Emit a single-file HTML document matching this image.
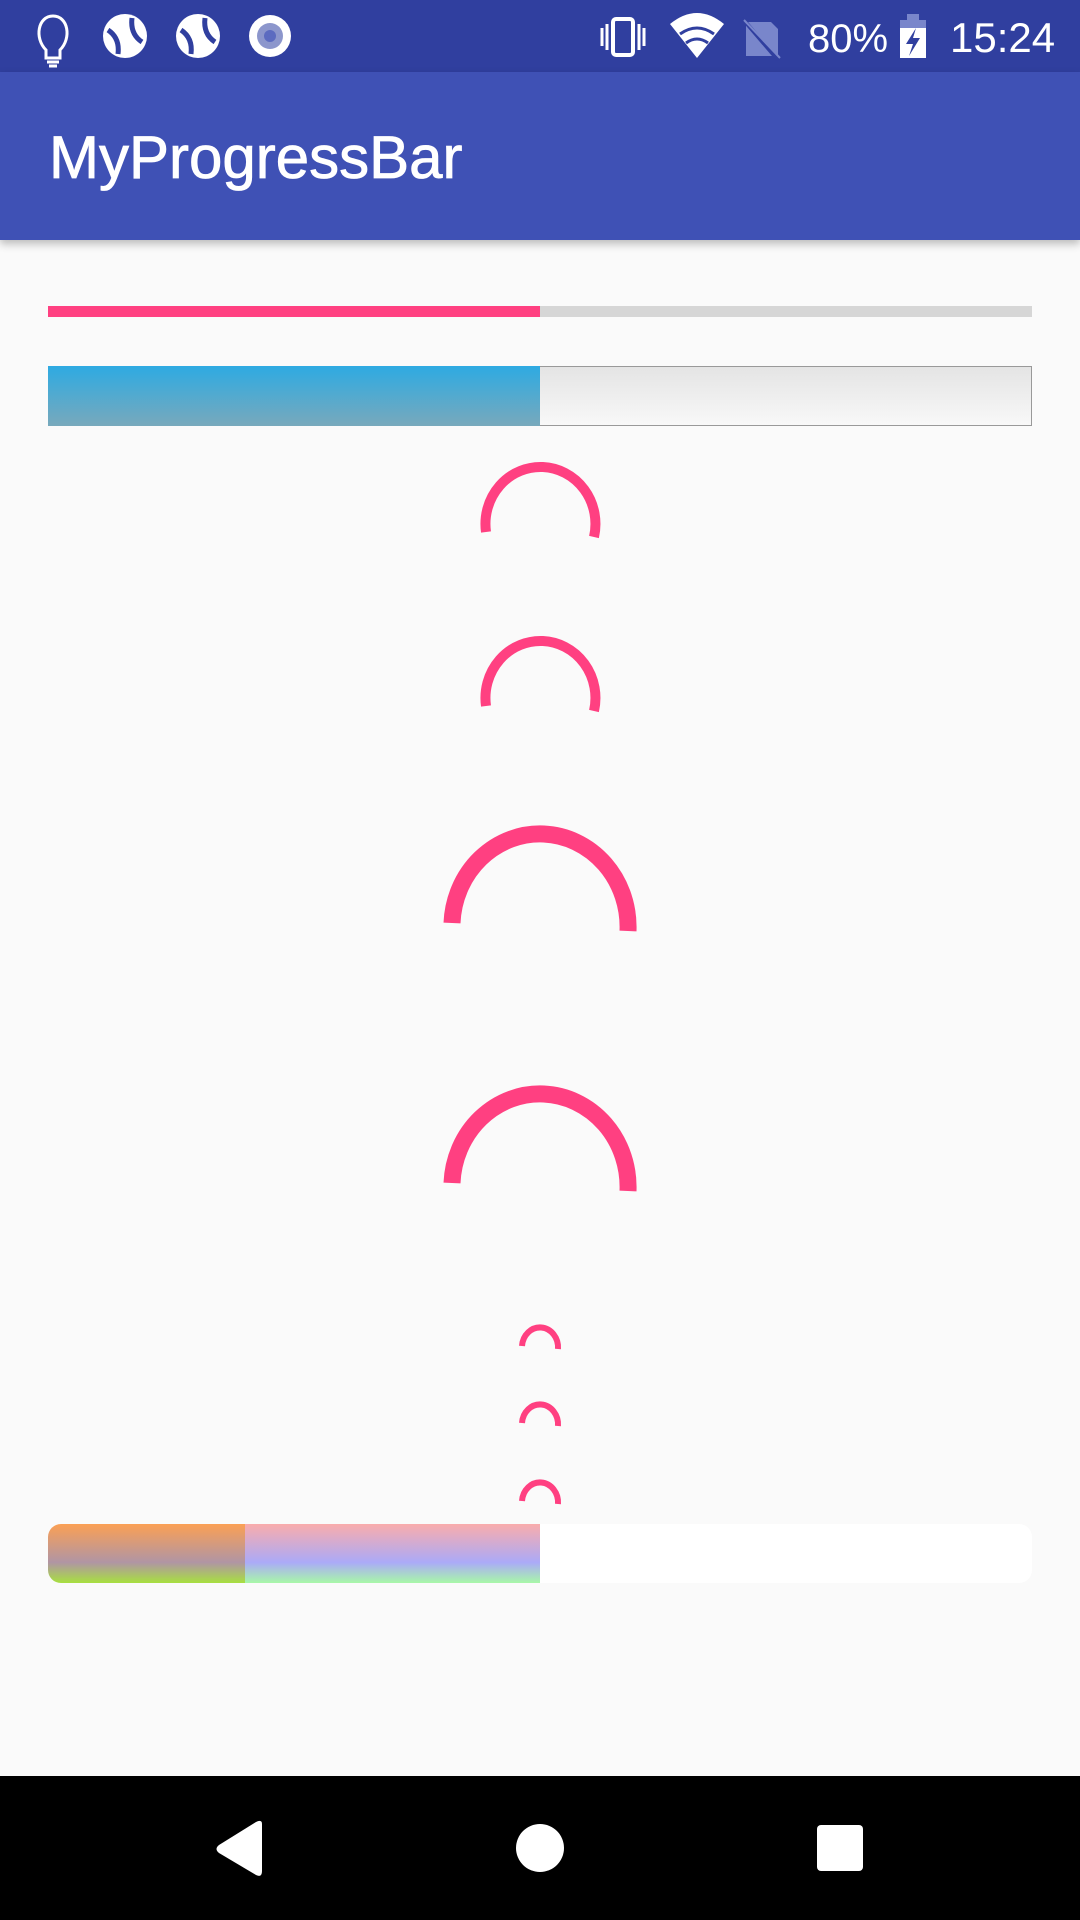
<!DOCTYPE html>
<html><head><meta charset="utf-8"><style>
html,body{margin:0;padding:0;width:1080px;height:1920px;overflow:hidden;background:#fafafa;font-family:"Liberation Sans",sans-serif;position:relative}
.sb{position:absolute;left:0;top:0;width:1080px;height:72px;background:#303f9f}
.ab{position:absolute;left:0;top:72px;width:1080px;height:168px;background:#3f51b5;box-shadow:0 4px 8px rgba(0,0,0,.25)}
.title{position:absolute;left:49px;top:122px;color:#fff;font-size:60px;line-height:72px;-webkit-text-stroke:0.8px #fff}
</style></head><body>
<div class="sb"></div>
<div class="ab"></div>
<div class="title">MyProgressBar</div>
<svg width="1080" height="1920" style="position:absolute;left:0;top:0">
<defs>
<linearGradient id="bl" x1="0" y1="0" x2="0" y2="1"><stop offset="0" stop-color="#2eaae2"/><stop offset="1" stop-color="#78a9bc"/></linearGradient>
<linearGradient id="gr" x1="0" y1="0" x2="0" y2="1"><stop offset="0" stop-color="#e4e4e4"/><stop offset="1" stop-color="#f8f8f8"/></linearGradient>
<linearGradient id="g1" x1="0" y1="0" x2="0" y2="1"><stop offset="0" stop-color="#fba055"/><stop offset="0.65" stop-color="#b095a4"/><stop offset="1" stop-color="#a8e040"/></linearGradient>
<linearGradient id="g2" x1="0" y1="0" x2="0" y2="1"><stop offset="0" stop-color="#f9acac"/><stop offset="0.65" stop-color="#abaaf8"/><stop offset="1" stop-color="#a8f8a8"/></linearGradient>
<clipPath id="rc"><rect x="48" y="1524" width="984" height="59" rx="13"/></clipPath>
</defs>
<g fill="none" stroke="#fff" stroke-width="3">
<path d="M46 50 C34 38 38 16 53 16 C68 16 72 38 60 50 L60 58 L46 58 Z M47 62 H59 M49 66 H57"/>
</g>
<circle cx="125" cy="36" r="22" fill="#fff"/><path d="M108 30 Q120 38 118 54 M142 42 Q130 34 132 18" stroke="#303f9f" stroke-width="5" fill="none"/>
<circle cx="198" cy="36" r="22" fill="#fff"/><path d="M181 30 Q193 38 191 54 M215 42 Q203 34 205 18" stroke="#303f9f" stroke-width="5" fill="none"/>
<circle cx="270" cy="36" r="21" fill="#fff"/><circle cx="270" cy="36" r="13" fill="#8c96cc"/><circle cx="270" cy="36" r="6" fill="#5c6bc0"/>
<rect x="613" y="19" width="20" height="36" rx="3" fill="none" stroke="#fff" stroke-width="4"/>
<path d="M602 28 V46 M607 24 V50 M639 24 V50 M644 28 V46" stroke="#fff" stroke-width="3"/>
<path d="M670 24 Q697 2 724 24 L697 58 Z" fill="#fff"/><path d="M680 34 Q697 22 714 34" stroke="#303f9f" stroke-width="3" fill="none"/><path d="M686 43 Q697 35 708 43" stroke="#303f9f" stroke-width="3" fill="none"/>
<path d="M746 22 H771 L778 29 V56 H746 Z" fill="#7986cb"/><path d="M742 18 L778 60" stroke="#303f9f" stroke-width="4"/><path d="M744 20 L780 58" stroke="#7986cb" stroke-width="2"/>
<text x="808" y="52" fill="#fff" font-size="40" font-family="Liberation Sans">80%</text>
<rect x="900" y="20" width="26" height="38" fill="#fff"/><rect x="907" y="14" width="12" height="6" fill="#7986cb"/><rect x="900" y="20" width="26" height="8" fill="#7986cb"/><path d="M916 28 L906 44 H913 L909 56 L920 38 H913 Z" fill="#303f9f"/>
<text x="950" y="52" fill="#fff" font-size="42" font-family="Liberation Sans">15:24</text>
<rect x="48" y="306" width="984" height="11" fill="#d6d6d6"/>
<rect x="48" y="306" width="492" height="11" fill="#ff4081"/>
<rect x="48.5" y="366.5" width="983" height="59" fill="url(#gr)" stroke="#999" stroke-width="1"/>
<rect x="48" y="366" width="492" height="60" fill="url(#bl)"/>
<g fill="none" stroke="#ff4081">
<path d="M486 532 A55 57 0 1 1 594 537" stroke-width="10"/>
<path d="M486 706 A55 57 0 1 1 594 711" stroke-width="10"/>
<path d="M452 923 A88 93 0 1 1 628 931" stroke-width="17"/>
<path d="M452 1183 A88 93 0 1 1 628 1191" stroke-width="17"/>
<path d="M522 1346 A18 20 0 1 1 558 1349" stroke-width="6"/>
<path d="M522 1423 A18 20 0 1 1 558 1426" stroke-width="6"/>
<path d="M522 1501 A18 20 0 1 1 558 1504" stroke-width="6"/>
</g>
<g clip-path="url(#rc)">
<rect x="48" y="1524" width="984" height="59" fill="#fff"/>
<rect x="48" y="1524" width="197" height="59" fill="url(#g1)"/>
<rect x="245" y="1524" width="295" height="59" fill="url(#g2)"/>
</g>
<rect x="0" y="1776" width="1080" height="144" fill="#000"/>
<path d="M262 1824 V1871 Q262 1878 256 1875 L219 1853 Q214 1849 219 1845 L256 1822 Q262 1819 262 1824 Z" fill="#fff"/>
<circle cx="540" cy="1848" r="24" fill="#fff"/>
<rect x="817" y="1825" width="46" height="46" rx="4" fill="#fff"/>
</svg>
</body></html>
